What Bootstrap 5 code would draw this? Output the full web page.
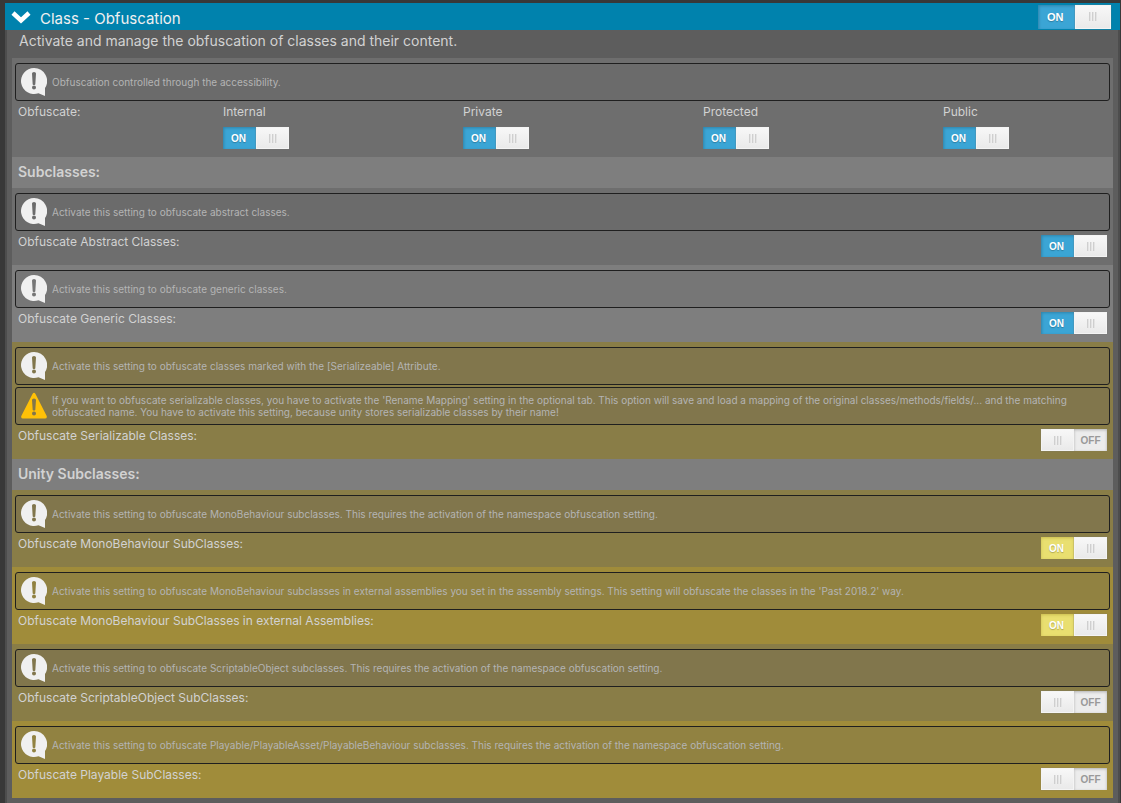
<!DOCTYPE html>
<html lang="en">
<head>
<meta charset="utf-8">
<meta name="viewport" content="width=device-width, initial-scale=1">
<title>Class - Obfuscation</title>
<link href="https://cdn.jsdelivr.net/npm/bootstrap@5.3.0/dist/css/bootstrap.min.css" rel="stylesheet">
<script src="https://cdn.jsdelivr.net/npm/bootstrap@5.3.0/dist/js/bootstrap.bundle.min.js"></script>
<style>
  body { background: #383838; color: #d2d2d2; font-family: Inter, "Liberation Sans", sans-serif; font-size: 12px; line-height: 16px; padding: 3px 1px 0 5px; }
  .panel-head { background: #0082ad; height: 27px; padding: 0 9px 0 6px; color: #f0f0f0; }
  .panel-head h1 { font-size: 15px; line-height: 20px; font-weight: 400; padding-top: 5px; }
  .fold { border: 0; background: none; padding: 0; width: 20px; height: 14px; display: flex; margin-right: 9px; }
  .panel-main { background: #5d5d5d; border: solid #4d4d4d; border-width: 0 2px; padding: 0 5px 5px; }
  .intro { font-size: 14px; line-height: 20px; padding: 1px 7px 7px; }
  .tone-a { background: #6e6e6e; }
  .tone-b { background: #7e7e7e; }
  .tone-c { background: #897d47; }
  .tone-d { background: #a08c3a; }
  .setting { padding: 5px 3px 8px; }
  .note { border: 1px solid #1f1f1f; border-radius: 3px; min-height: 38px; padding: 0 5px; gap: 5px; background: #6b6b6b; color: #b4b4b4; font-size: 10px; line-height: 12px; }
  .note + .note { margin-top: 2px; }
  .note svg { width: 26px; height: 28px; flex: none; }
  .tone-b .note { background: #767676; }
  .tone-c .note { background: #81764c; }
  .tone-d .note { background: #918241; }
  .line { padding: 3px 3px 0; min-height: 26px; }
  .line .toggle { margin-top: 1px; }
  .section-title { font-size: 14px; line-height: 30px; font-weight: 600; padding: 0 6px 1px; }
  .access { display: grid; grid-template-columns: 205fr 240fr 240fr 240fr 167fr; padding: 3px 0 0 3px; }
  .access .toggle { margin-top: 7px; }
  .toggle { position: relative; display: flex; width: 66px; height: 22px; flex: none; font: bold 10px/24px "Liberation Sans", sans-serif; text-align: center; }
  .toggle input { position: absolute; inset: 0; width: 100%; height: 100%; opacity: 0; cursor: pointer; z-index: 1; }
  .toggle .on, .toggle .off, .toggle .grip { width: 50%; height: 100%; }
  .toggle .on { background: #3ba5d5; color: #fff; text-shadow: 0 1px 1px rgba(0,0,0,.25); box-shadow: inset 1px 1px 3px rgba(0,0,0,.2); order: 0; padding-right: 2px; }
  .toggle .off { background: #ececec; color: #999; box-shadow: inset 0 1px 3px rgba(0,0,0,.25); order: 2; }
  .toggle .grip { order: 1; background: linear-gradient(#f8f8f8, #e9e9e9); box-shadow: inset 0 0 0 1px #f4f4f4, 0 0 1px #777; display: flex; align-items: center; justify-content: center; gap: 1px; }
  .grip i { width: 1px; height: 9px; background: #cfcfcf; box-shadow: 1px 0 #e4e4e4; margin-right: 1px; }
  .toggle input:checked ~ .off, .toggle input:not(:checked) ~ .on { display: none; }
  .toggle.warm .on { background: #e9df70; box-shadow: inset 0 1px 3px rgba(130,110,0,.3); }
  .toggle.large { width: 73px; height: 24px; font-size: 11px; line-height: 24px; }
</style>
</head>
<body>
<svg class="d-none" aria-hidden="true">
  <symbol id="info" viewBox="0 0 26 28">
    <path fill="#f0f0f0" fill-rule="evenodd" d="M13 0a13 13 0 0 1 11 20L24 28 17.500 25.200A13 13 0 1 1 13 0ZM11 5.500 11.700 16.500Q13 17.500 14.300 16.500L15 5.500Q15 4 13 4T11 5.500ZM13 17.500a2 2 0 1 0 0 4 2 2 0 0 0 0-4Z"/>
  </symbol>
  <symbol id="warning" viewBox="0 0 26 28">
    <path fill="#ffc107" fill-rule="evenodd" d="M11.500 2Q13-.5 14.500 2L25.700 24Q26.300 26.500 24 26.500H2Q-.3 26.500.3 24ZM11 8 11.700 18Q13 19 14.300 18L15 8Q15 6.500 13 6.500T11 8ZM13 19.500a2 2 0 1 0 0 4 2 2 0 0 0 0-4Z"/>
  </symbol>
</svg>

<main>
  <header class="panel-head d-flex align-items-center">
    <button class="fold" type="button" aria-label="Collapse section">
      <svg width="20" height="14" viewBox="0 0 20 14"><path d="M2 3 10 10.500 18 3" fill="none" stroke="#fff" stroke-width="4.500"/></svg>
    </button>
    <h1 class="m-0 flex-grow-1"><label for="t-class">Class - Obfuscation</label></h1>
    <span class="toggle large"><input type="checkbox" id="t-class" checked><span class="on">ON</span><span class="grip"><i></i><i></i><i></i></span><span class="off">OFF</span></span>
  </header>

  <div class="panel-main">
    <p class="intro m-0">Activate and manage the obfuscation of classes and their content.</p>

    <section class="setting tone-a">
      <div class="note d-flex align-items-center"><svg><use href="#info"/></svg><span>Obfuscation controlled through the accessibility.</span></div>
      <div class="access">
        <span>Obfuscate:</span>
        <div><label class="d-block" for="t-int">Internal</label><span class="toggle"><input type="checkbox" id="t-int" checked><span class="on">ON</span><span class="grip"><i></i><i></i><i></i></span><span class="off">OFF</span></span></div>
        <div><label class="d-block" for="t-pri">Private</label><span class="toggle"><input type="checkbox" id="t-pri" checked><span class="on">ON</span><span class="grip"><i></i><i></i><i></i></span><span class="off">OFF</span></span></div>
        <div><label class="d-block" for="t-pro">Protected</label><span class="toggle"><input type="checkbox" id="t-pro" checked><span class="on">ON</span><span class="grip"><i></i><i></i><i></i></span><span class="off">OFF</span></span></div>
        <div><label class="d-block" for="t-pub">Public</label><span class="toggle"><input type="checkbox" id="t-pub" checked><span class="on">ON</span><span class="grip"><i></i><i></i><i></i></span><span class="off">OFF</span></span></div>
      </div>
    </section>

    <h2 class="section-title tone-b m-0">Subclasses:</h2>

    <section class="setting tone-a">
      <div class="note d-flex align-items-center"><svg><use href="#info"/></svg><span>Activate this setting to obfuscate abstract classes.</span></div>
      <div class="line d-flex justify-content-between align-items-start"><label for="t-abs">Obfuscate Abstract Classes:</label><span class="toggle"><input type="checkbox" id="t-abs" checked><span class="on">ON</span><span class="grip"><i></i><i></i><i></i></span><span class="off">OFF</span></span></div>
    </section>

    <section class="setting tone-b">
      <div class="note d-flex align-items-center"><svg><use href="#info"/></svg><span>Activate this setting to obfuscate generic classes.</span></div>
      <div class="line d-flex justify-content-between align-items-start"><label for="t-gen">Obfuscate Generic Classes:</label><span class="toggle"><input type="checkbox" id="t-gen" checked><span class="on">ON</span><span class="grip"><i></i><i></i><i></i></span><span class="off">OFF</span></span></div>
    </section>

    <section class="setting tone-c">
      <div class="note d-flex align-items-center"><svg><use href="#info"/></svg><span>Activate this setting to obfuscate classes marked with the [Serializeable] Attribute.</span></div>
      <div class="note d-flex align-items-center"><svg><use href="#warning"/></svg><span>If you want to obfuscate serializable classes, you have to activate the 'Rename Mapping' setting in the optional tab. This option will save and load a mapping of the original classes/methods/fields/... and the matching obfuscated name. You have to activate this setting, because unity stores serializable classes by their name!</span></div>
      <div class="line d-flex justify-content-between align-items-start"><label for="t-ser">Obfuscate Serializable Classes:</label><span class="toggle"><input type="checkbox" id="t-ser"><span class="on">ON</span><span class="grip"><i></i><i></i><i></i></span><span class="off">OFF</span></span></div>
    </section>

    <h2 class="section-title tone-b m-0">Unity Subclasses:</h2>

    <section class="setting tone-c">
      <div class="note d-flex align-items-center"><svg><use href="#info"/></svg><span>Activate this setting to obfuscate MonoBehaviour subclasses. This requires the activation of the namespace obfuscation setting.</span></div>
      <div class="line d-flex justify-content-between align-items-start"><label for="t-mono">Obfuscate MonoBehaviour SubClasses:</label><span class="toggle warm"><input type="checkbox" id="t-mono" checked><span class="on">ON</span><span class="grip"><i></i><i></i><i></i></span><span class="off">OFF</span></span></div>
    </section>

    <section class="setting tone-d">
      <div class="note d-flex align-items-center"><svg><use href="#info"/></svg><span>Activate this setting to obfuscate MonoBehaviour subclasses in external assemblies you set in the assembly settings. This setting will obfuscate the classes in the 'Past 2018.2' way.</span></div>
      <div class="line d-flex justify-content-between align-items-start"><label for="t-ext">Obfuscate MonoBehaviour SubClasses in external Assemblies:</label><span class="toggle warm"><input type="checkbox" id="t-ext" checked><span class="on">ON</span><span class="grip"><i></i><i></i><i></i></span><span class="off">OFF</span></span></div>
    </section>

    <section class="setting tone-c">
      <div class="note d-flex align-items-center"><svg><use href="#info"/></svg><span>Activate this setting to obfuscate ScriptableObject subclasses. This requires the activation of the namespace obfuscation setting.</span></div>
      <div class="line d-flex justify-content-between align-items-start"><label for="t-scr">Obfuscate ScriptableObject SubClasses:</label><span class="toggle warm"><input type="checkbox" id="t-scr"><span class="on">ON</span><span class="grip"><i></i><i></i><i></i></span><span class="off">OFF</span></span></div>
    </section>

    <section class="setting tone-d">
      <div class="note d-flex align-items-center"><svg><use href="#info"/></svg><span>Activate this setting to obfuscate Playable/PlayableAsset/PlayableBehaviour subclasses. This requires the activation of the namespace obfuscation setting.</span></div>
      <div class="line d-flex justify-content-between align-items-start"><label for="t-play">Obfuscate Playable SubClasses:</label><span class="toggle warm"><input type="checkbox" id="t-play"><span class="on">ON</span><span class="grip"><i></i><i></i><i></i></span><span class="off">OFF</span></span></div>
    </section>
  </div>
</main>
</body>
</html>
